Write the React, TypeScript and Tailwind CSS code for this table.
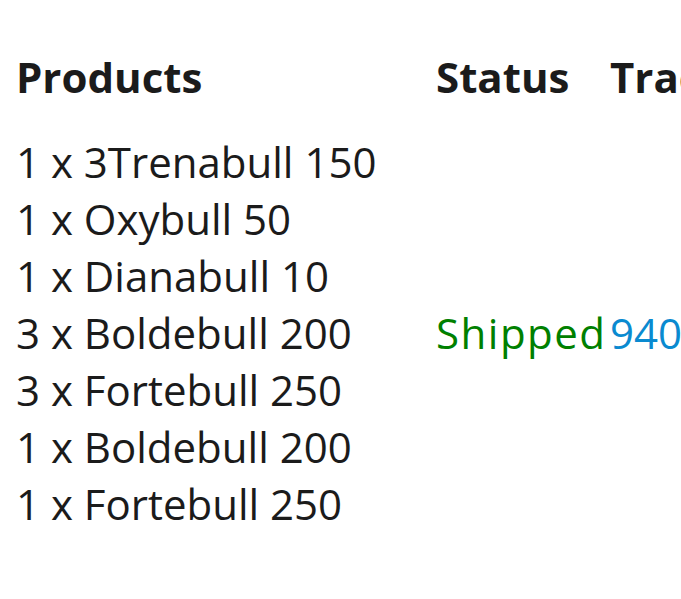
import React from 'react'

const products = [
    '1 x 3Trenabull 150',
    '1 x Oxybull 50',
    '1 x Dianabull 10',
    '3 x Boldebull 200',
    '3 x Fortebull 250',
    '1 x Boldebull 200',
    '1 x Fortebull 250',
]

export default function App() {
    return (
        <div
            className="w-[681px] h-[599px] overflow-hidden bg-white pl-4 pt-12 text-[#1b1b1b]"
            style={{ fontFamily: '"Open Sans", "Liberation Sans", sans-serif' }}
        >
            <table className="w-[1000px] table-fixed border-collapse text-[42px] leading-[57px] whitespace-nowrap">
                <thead>
                    <tr>
                        <th className="w-[420px] p-0 pb-7 text-left font-bold">Products</th>
                        <th className="w-[174px] p-0 pb-7 text-left font-bold">Status</th>
                        <th className="p-0 pb-7 text-left font-bold">Tracking</th>
                    </tr>
                </thead>
                <tbody>
                    <tr>
                        <td className="p-0 align-middle">
                            {products.map((p) => (
                                <div key={p}>{p}</div>
                            ))}
                        </td>
                        <td className="p-0 align-middle tracking-[1.5px] text-[#008000]">Shipped</td>
                        <td className="p-0 align-middle text-[#0a8ad0]">9400111899223344556677</td>
                    </tr>
                </tbody>
            </table>
        </div>
    )
}
